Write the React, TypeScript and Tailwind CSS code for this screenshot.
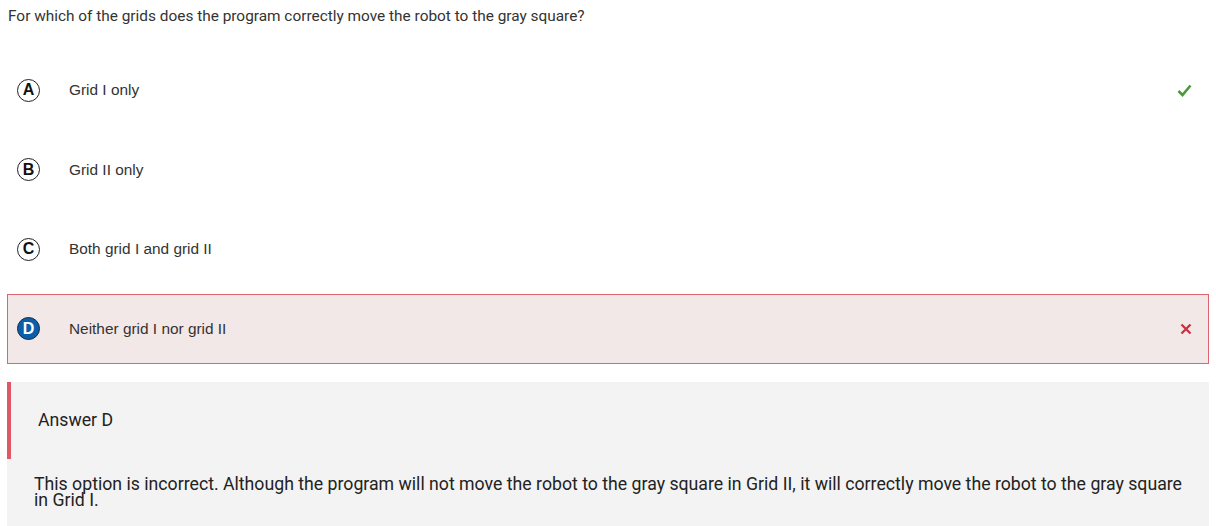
import React from 'react';

interface Option {
    letter: string;
    text: string;
    status?: 'correct' | 'wrong';
}

const options: Option[] = [
    { letter: 'A', text: 'Grid I only', status: 'correct' },
    { letter: 'B', text: 'Grid II only' },
    { letter: 'C', text: 'Both grid I and grid II' },
    { letter: 'D', text: 'Neither grid I nor grid II', status: 'wrong' },
];

const Check = () => (
    <svg width="15" height="13" viewBox="0 0 15 13">
        <path d="M1.5 7 L5.5 11 L13.5 1.5" fill="none" stroke="#4a9a3c" strokeWidth="2.6" />
    </svg>
);

const Cross = () => (
    <svg width="12" height="12" viewBox="0 0 12 12">
        <path d="M1.5 1.5 L10.5 10.5 M10.5 1.5 L1.5 10.5" fill="none" stroke="#c8323f" strokeWidth="2.3" />
    </svg>
);

const App = () => {
    return (
        <div className="px-[7px] bg-white min-h-[526px] font-['Roboto',sans-serif] text-[#333]">
            <p className="pt-[7px] pl-[1px] text-[15.4px] leading-[18px] text-[#333]">
                For which of the grids does the program correctly move the robot to the gray square?
            </p>

            <div className="mt-[30px] flex flex-col gap-[9.5px]">
                {options.map(opt => {
                    const selected = opt.status === 'wrong';
                    return (
                        <div
                            key={opt.letter}
                            className={
                                selected
                                    ? 'h-[70px] flex items-center border border-[#de6570] bg-[#f3e8e8] pl-[9px] pr-[16px]'
                                    : 'h-[70px] flex items-center border border-transparent pl-[9px] pr-[16px]'
                            }
                        >
                            <span
                                className={
                                    selected
                                        ? "w-[23px] h-[23px] rounded-full border border-[#1c2a3a] bg-[#0b5faa] text-white flex items-center justify-center text-[16px] font-bold font-['Liberation_Sans',sans-serif]"
                                        : "w-[23px] h-[23px] rounded-full border border-[#222] bg-white text-[#111] flex items-center justify-center text-[16px] font-bold font-['Liberation_Sans',sans-serif]"
                                }
                            >
                                {opt.letter}
                            </span>
                            <span className="ml-[29px] flex-1 text-[15.4px] text-[#333] font-['Liberation_Sans',sans-serif]">
                                {opt.text}
                            </span>
                            {opt.status === 'correct' && <Check />}
                            {opt.status === 'wrong' && <Cross />}
                        </div>
                    );
                })}
            </div>

            <div className="mt-[18px] bg-[#f3f3f3]">
                <div className="h-[77px] flex items-center border-l-4 border-[#e05766] pl-[27px] text-[17.7px] text-[#222]">
                    Answer D
                </div>
                <p className="pt-[17px] pl-[27px] pr-[18px] pb-[20px] text-[17.7px] leading-[16.5px] text-[#222]">
                    This option is incorrect. Although the program will not move the robot to the gray square in Grid II, it will correctly move the robot to the gray square in Grid I.
                </p>
            </div>
        </div>
    );
};

export default App;
